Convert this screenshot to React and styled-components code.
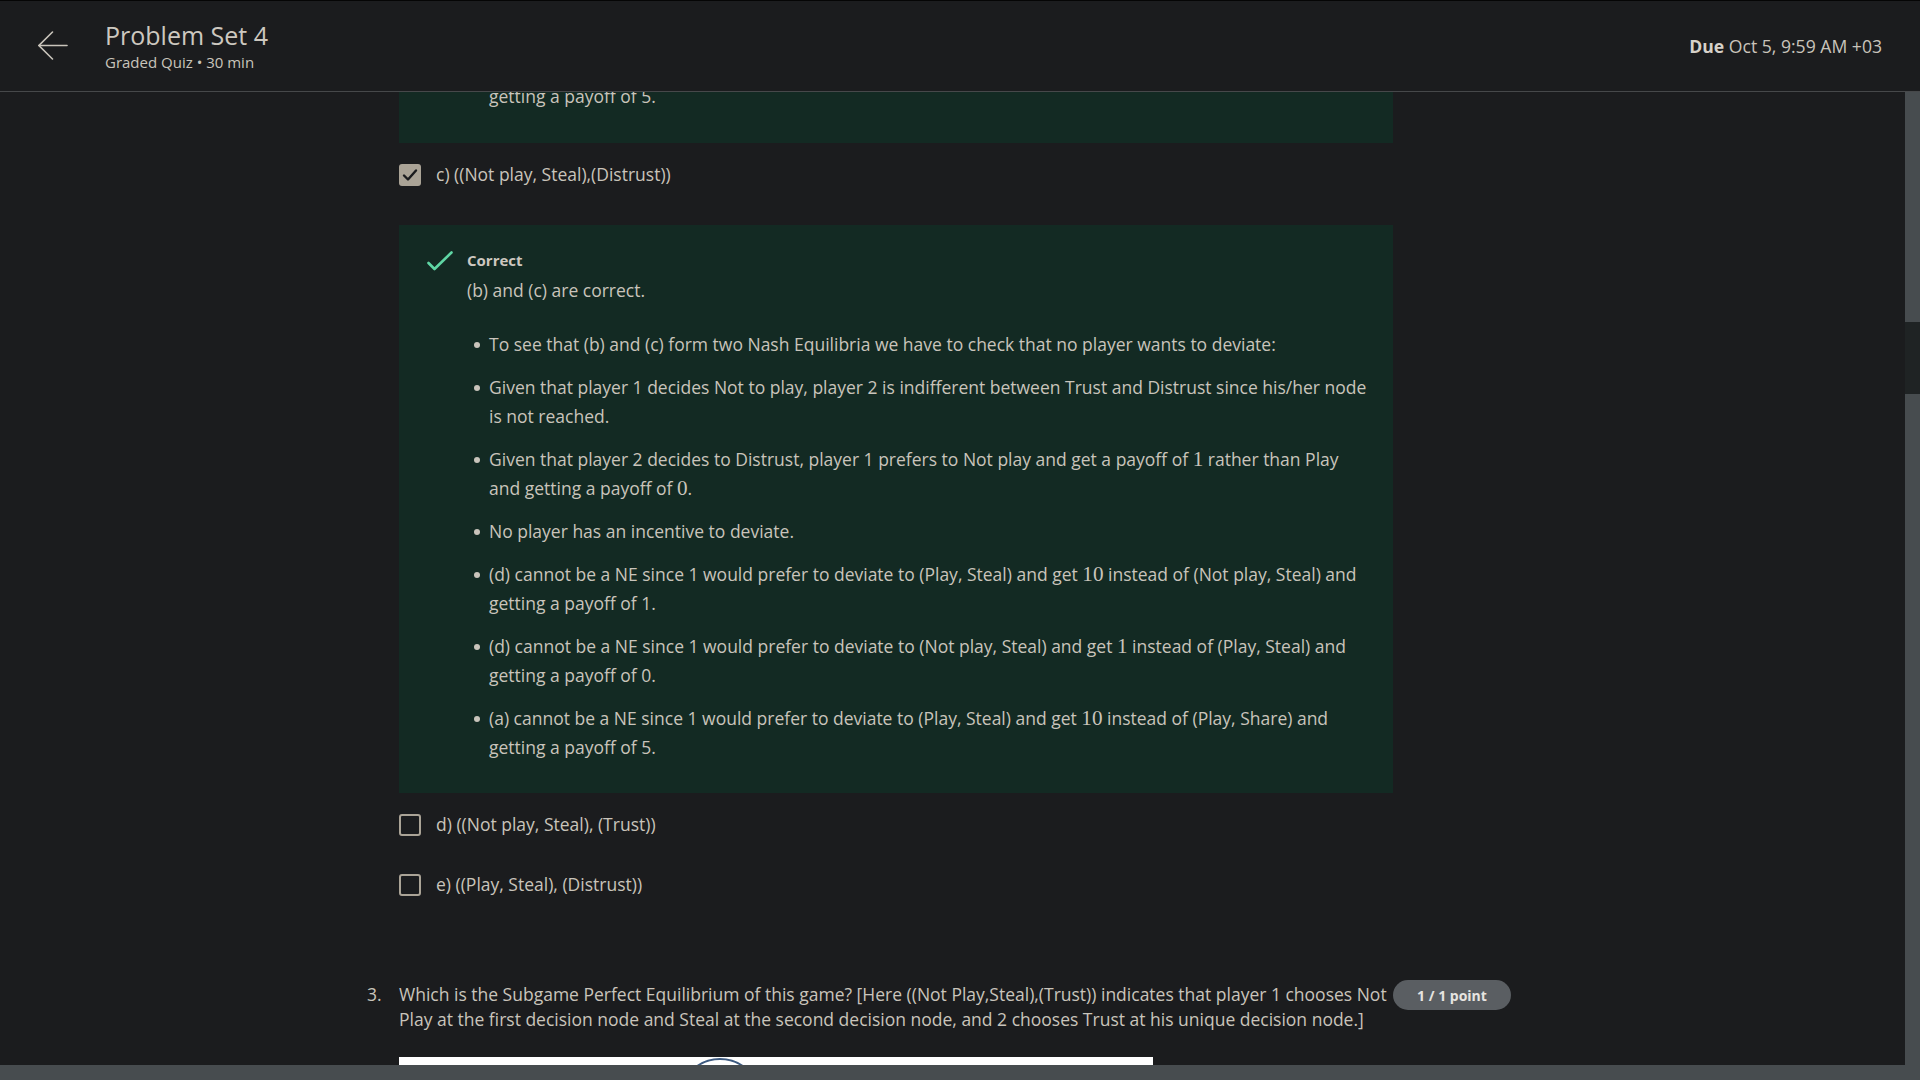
import React from "react";
import styled, { createGlobalStyle } from "styled-components";

const Global = createGlobalStyle`
  html, body { margin: 0; padding: 0; background: #1b1c1e; }
  body { font-family: "Open Sans", "Noto Sans", sans-serif; color: #c9c4bb; }
  * { box-sizing: border-box; }
`;

const Page = styled.div`
  height: 100vh;
  display: flex;
  flex-direction: column;
  background: #1b1c1e;
  overflow: hidden;
`;

const Header = styled.header`
  height: 92px;
  flex: none;
  display: flex;
  align-items: center;
  padding: 0 38px;
  border-top: 1px solid #050505;
  border-bottom: 1px solid #46484a;
  background: #1b1c1e;
`;

const BackButton = styled.button`
  width: 30px;
  height: 30px;
  padding: 0;
  margin-right: 37px;
  border: 0;
  background: transparent;
  display: flex;
  color: #c9c4bb;
`;

const TitleBlock = styled.div`
  display: flex;
  flex-direction: column;
  flex: 1;
`;

const Title = styled.h1`
  margin: 0;
  font-size: 25px;
  line-height: 30px;
  font-weight: 400;
  color: #cdc8c0;
`;

const Subtitle = styled.div`
  margin-top: 2px;
  font-size: 15px;
  line-height: 20px;
  color: #c9c4bb;
`;

const Due = styled.div`
  font-size: 17.6px;
  color: #c9c4bb;
  b { font-weight: 700; color: #d6d1c9; }
`;

const Body = styled.div`
  flex: 1;
  min-height: 0;
  display: flex;
`;

const Main = styled.main`
  flex: 1;
  overflow: hidden;
`;

const ScrollTrack = styled.div`
  width: 15px;
  flex: none;
  display: flex;
  flex-direction: column;
`;

const TrackPart = styled.div`
  background: ${(p) => (p.$thumb ? "#1f2324" : "#474c4f")};
  height: ${(p) => (p.$h ? `${p.$h}px` : "auto")};
  flex: ${(p) => (p.$h ? "none" : "1")};
`;

const BottomBar = styled.div`
  height: 15px;
  flex: none;
  background: #474c4f;
`;

const Content = styled.div`
  display: grid;
  grid-template-columns: 32px 994px auto;
  padding-left: 367px;
  font-size: 17.5px;
`;

const FeedbackBox = styled.section`
  grid-column: 2;
  background: #132a23;
  display: flex;
  margin-top: ${(p) => p.$mt || 0}px;
  padding: ${(p) => (p.$partial ? "0 24px 32px 90px" : "25px 24px 31px 28px")};
`;

const IconCol = styled.div`
  width: 25px;
  margin-right: 15px;
  flex: none;
  padding-top: 1px;
  color: #5fd6a4;
`;

const FeedbackBody = styled.div`
  flex: 1;
  font-size: 17.5px;
  line-height: 29px;
`;

const Verdict = styled.div`
  font-size: 15px;
  line-height: 21px;
  font-weight: 700;
  color: #cdc8c0;
`;

const Para = styled.p`
  margin: 5px 0 0;
`;

const List = styled.ul`
  list-style: none;
  margin: 25px 0 0;
  padding: 0;
  display: flex;
  flex-direction: column;
  gap: 14px;
`;

const Item = styled.li`
  display: flex;
`;

const Dot = styled.span`
  width: 22px;
  flex: none;
  position: relative;
  &::before {
    content: "";
    position: absolute;
    left: 7px;
    top: 12px;
    width: 6px;
    height: 6px;
    border-radius: 50%;
    background: #c9c4bb;
  }
`;

const Math = styled.span`
  font-family: "Liberation Serif", "DejaVu Serif", serif;
  font-size: 1.21em;
  line-height: 1;
`;

const OptionRow = styled.label`
  grid-column: 2;
  display: flex;
  align-items: center;
  padding: 17px 0 14px;
  font-size: 17.5px;
  line-height: 29px;
  color: #c9c4bb;
`;

const Box = styled.span`
  width: 22px;
  height: 22px;
  flex: none;
  margin-right: 15px;
  border-radius: 3px;
  display: flex;
  align-items: center;
  justify-content: center;
  background: ${(p) => (p.$checked ? "#aaa396" : "transparent")};
  border: ${(p) => (p.$checked ? "none" : "2px solid #aaa396")};
`;

const QNumber = styled.div`
  grid-column: 1;
  margin-top: 67px;
  padding-top: 2px;
  font-size: 17.5px;
  line-height: 25px;
`;

const QText = styled.div`
  grid-column: 2;
  margin-top: 67px;
  padding-top: 2px;
  font-size: 17.5px;
  line-height: 25px;
`;

const Badge = styled.div`
  grid-column: 3;
  margin-top: 67px;
  align-self: start;
  height: 30px;
  width: 118px;
  border-radius: 15px;
  background: #5a5e62;
  color: #e6e4e0;
  font-size: 14px;
  font-weight: 700;
  display: flex;
  align-items: center;
  justify-content: center;
`;

const Figure = styled.div`
  grid-column: 2;
  width: 754px;
  height: 300px;
  margin-top: 25px;
  background: #ffffff;
  display: flex;
  align-items: flex-start;
  padding-left: 279px;
`;

const BackArrow = () => (
  <svg width="30" height="30" viewBox="0 0 30 30" fill="none" stroke="currentColor" strokeWidth="1.6" strokeLinecap="round">
    <path d="M1 14.5 H29" />
    <path d="M14.5 1 L1 14.5 L14.5 28" />
  </svg>
);

const CheckMark = () => (
  <svg width="26" height="20" viewBox="0 0 26 20" fill="none" stroke="currentColor" strokeWidth="2.6" strokeLinecap="round" strokeLinejoin="round">
    <path d="M1.5 12 L7.5 18 L24.5 1.5" />
  </svg>
);

const BoxTick = () => (
  <svg width="16" height="14" viewBox="0 0 16 14" fill="none" stroke="#1b1c1e" strokeWidth="2.4" strokeLinecap="round" strokeLinejoin="round">
    <path d="M2 7.5 L6 11.5 L14 2.5" />
  </svg>
);

const Option = ({ checked, children }) => (
  <OptionRow>
    <Box $checked={checked}>{checked && <BoxTick />}</Box>
    {children}
  </OptionRow>
);

const bullets = [
  <>To see that (b) and (c) form two Nash Equilibria we have to check that no player wants to deviate:</>,
  <>Given that player 1 decides Not to play, player 2 is indifferent between Trust and Distrust since his/her node is not reached.</>,
  <>
    Given that player 2 decides to Distrust, player 1 prefers to Not play and get a payoff of <Math>1</Math> rather than Play and getting a payoff of <Math>0</Math>.
  </>,
  <>No player has an incentive to deviate.</>,
  <>
    (d) cannot be a NE since 1 would prefer to deviate to (Play, Steal) and get <Math>10</Math> instead of (Not play, Steal) and getting a payoff of 1.
  </>,
  <>
    (d) cannot be a NE since 1 would prefer to deviate to (Not play, Steal) and get <Math>1</Math> instead of (Play, Steal) and getting a payoff of 0.
  </>,
  <>
    (a) cannot be a NE since 1 would prefer to deviate to (Play, Steal) and get <Math>10</Math> instead of (Play, Share) and getting a payoff of 5.
  </>,
];

export default function App() {
  return (
    <Page>
      <Global />
      <Header>
        <BackButton aria-label="Back">
          <BackArrow />
        </BackButton>
        <TitleBlock>
          <Title>Problem Set 4</Title>
          <Subtitle>Graded Quiz • 30 min</Subtitle>
        </TitleBlock>
        <Due>
          <b>Due</b> Oct 5, 9:59 AM +03
        </Due>
      </Header>
      <Body>
        <Main>
          <Content>
            <FeedbackBox $partial $mt={-10}>
              <FeedbackBody>getting a payoff of 5.</FeedbackBody>
            </FeedbackBox>

            <Option checked>c) ((Not play, Steal),(Distrust))</Option>

            <FeedbackBox $mt={22}>
              <IconCol>
                <CheckMark />
              </IconCol>
              <FeedbackBody>
                <Verdict>Correct</Verdict>
                <Para>(b) and (c) are correct.</Para>
                <List>
                  {bullets.map((b, i) => (
                    <Item key={i}>
                      <Dot />
                      <span>{b}</span>
                    </Item>
                  ))}
                </List>
              </FeedbackBody>
            </FeedbackBox>

            <Option>d) ((Not play, Steal), (Trust))</Option>
            <Option>e) ((Play, Steal), (Distrust))</Option>

            <QNumber>3.</QNumber>
            <QText>
              Which is the Subgame Perfect Equilibrium of this game? [Here ((Not Play,Steal),(Trust)) indicates that player 1 chooses Not Play at the first decision node and Steal at the second decision node, and 2 chooses Trust at his unique decision node.]
            </QText>
            <Badge>1 / 1 point</Badge>

            <Figure>
              <svg width="84" height="84" viewBox="0 0 84 84" fill="none" stroke="#3d5a80" strokeWidth="2">
                <circle cx="42" cy="42" r="40" />
              </svg>
            </Figure>
          </Content>
        </Main>
        <ScrollTrack>
          <TrackPart $h={230} />
          <TrackPart $thumb $h={72} />
          <TrackPart />
        </ScrollTrack>
      </Body>
      <BottomBar />
    </Page>
  );
}
